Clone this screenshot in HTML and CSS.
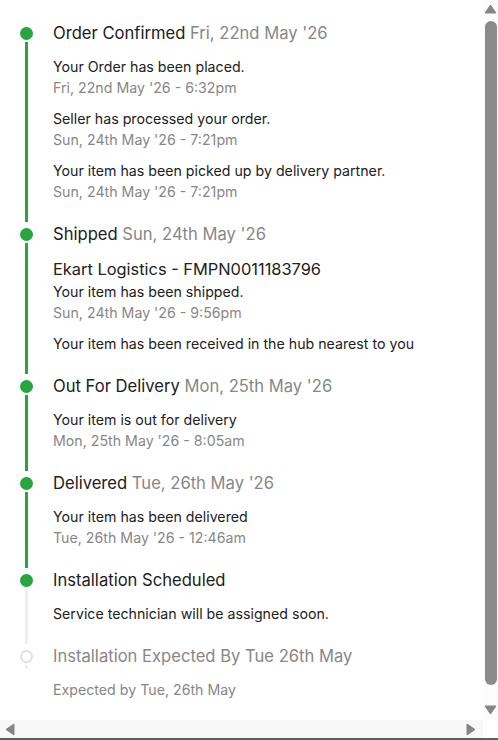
FILE: index.html
```html
<!DOCTYPE html>
<html lang="en">
<head>
    <meta charset="UTF-8">
    <meta name="viewport" content="width=device-width, initial-scale=1.0">
    <title>Order Tracking</title>
    <link rel="stylesheet" href="styles.css">
</head>
<body>
    <div class="window">
        <div class="viewport">
            <ol class="steps">
                <!-- Order confirmed -->
                <li class="step done next-done">
                    <div class="rail"><span class="dot"></span><span class="line"></span></div>
                    <div class="step-body">
                        <div class="step-title">Order Confirmed <span class="step-date">Fri, 22nd May '26</span></div>
                        <div class="events">
                            <div class="event">
                                <div class="msg">Your Order has been placed.</div>
                                <div class="time">Fri, 22nd May '26 - 6:32pm</div>
                            </div>
                            <div class="event">
                                <div class="msg">Seller has processed your order.</div>
                                <div class="time">Sun, 24th May '26 - 7:21pm</div>
                            </div>
                            <div class="event">
                                <div class="msg">Your item has been picked up by delivery partner.</div>
                                <div class="time">Sun, 24th May '26 - 7:21pm</div>
                            </div>
                        </div>
                    </div>
                </li>

                <!-- Shipped -->
                <li class="step done next-done">
                    <div class="rail"><span class="dot"></span><span class="line"></span></div>
                    <div class="step-body">
                        <div class="step-title">Shipped <span class="step-date">Sun, 24th May '26</span></div>
                        <div class="events">
                            <div class="event">
                                <div class="carrier">Ekart Logistics - FMPN0011183796</div>
                                <div class="msg">Your item has been shipped.</div>
                                <div class="time">Sun, 24th May '26 - 9:56pm</div>
                            </div>
                            <div class="event">
                                <div class="msg">Your item has been received in the hub nearest to you</div>
                            </div>
                        </div>
                    </div>
                </li>

                <!-- Out for delivery -->
                <li class="step done next-done">
                    <div class="rail"><span class="dot"></span><span class="line"></span></div>
                    <div class="step-body">
                        <div class="step-title">Out For Delivery <span class="step-date">Mon, 25th May '26</span></div>
                        <div class="events">
                            <div class="event">
                                <div class="msg">Your item is out for delivery</div>
                                <div class="time">Mon, 25th May '26 - 8:05am</div>
                            </div>
                        </div>
                    </div>
                </li>

                <!-- Delivered -->
                <li class="step done next-done">
                    <div class="rail"><span class="dot"></span><span class="line"></span></div>
                    <div class="step-body">
                        <div class="step-title">Delivered <span class="step-date">Tue, 26th May '26</span></div>
                        <div class="events">
                            <div class="event">
                                <div class="msg">Your item has been delivered</div>
                                <div class="time">Tue, 26th May '26 - 12:46am</div>
                            </div>
                        </div>
                    </div>
                </li>

                <!-- Installation scheduled -->
                <li class="step done">
                    <div class="rail"><span class="dot"></span><span class="line"></span></div>
                    <div class="step-body">
                        <div class="step-title">Installation Scheduled</div>
                        <div class="events">
                            <div class="event">
                                <div class="msg">Service technician will be assigned soon.</div>
                            </div>
                        </div>
                    </div>
                </li>

                <!-- Installation expected -->
                <li class="step pending last">
                    <div class="rail"><span class="dot"></span><span class="line"></span></div>
                    <div class="step-body">
                        <div class="step-title">Installation Expected By Tue 26th May</div>
                        <div class="events">
                            <div class="event">
                                <div class="time">Expected by Tue, 26th May</div>
                            </div>
                        </div>
                    </div>
                </li>
            </ol>
        </div>

        <!-- Vertical scrollbar -->
        <div class="vbar">
            <svg class="arrow-v" width="15" height="17" viewBox="0 0 15 17"><polygon points="2,13 7.5,5 13,13" /></svg>
            <div class="vtrack"><div class="vthumb"></div></div>
            <svg class="arrow-v" width="15" height="17" viewBox="0 0 15 17"><polygon points="2,3 13,3 7.5,11" /></svg>
        </div>

        <!-- Horizontal scrollbar -->
        <div class="hbar">
            <svg class="arrow-h" width="20" height="18" viewBox="0 0 20 18"><polygon points="6,9.5 14,4 14,15" /></svg>
            <div class="htrack"></div>
            <svg class="arrow-h" width="20" height="18" viewBox="0 0 20 18"><polygon points="4,4 12,9.5 4,15" /></svg>
        </div>
        <div class="corner"></div>
    </div>
</body>
</html>
```

FILE: styles.css
```css
html, body {
    margin: 0;
    padding: 0;
}

body {
    font-family: Inter, "Noto Sans", Arial, sans-serif;
    color: #212121;
    background-color: #fff;
}

.window {
    height: 740px;
    box-sizing: border-box;
    display: grid;
    grid-template-columns: 1fr 15px;
    grid-template-rows: 1fr 18px;
    border-bottom: 2px solid #5f5f5f;
}

.viewport {
    overflow: hidden;
}

/* scrollbars */
.vbar {
    display: flex;
    flex-direction: column;
    background-color: #fcfcfc;
}

.vtrack {
    flex: 1;
    padding: 4px 1px 0 2px;
}

.vthumb {
    height: 664px;
    border-radius: 6px;
    background-color: #8b8b8b;
}

.hbar {
    display: flex;
    background-color: #f8f8f8;
}

.htrack {
    flex: 1;
}

.corner {
    background-color: #fff;
}

.arrow-v polygon,
.arrow-h polygon {
    fill: #858585;
    stroke: #858585;
    stroke-width: 1;
    stroke-linejoin: round;
}

.arrow-v,
.arrow-h {
    display: block;
    flex-shrink: 0;
}

/* timeline */
.steps {
    list-style: none;
    margin: 0;
    padding: 21px 20px 26px 20px;
}

.step {
    display: flex;
    gap: 20px;
}

.rail {
    width: 13px;
    display: flex;
    flex-direction: column;
    align-items: center;
    flex-shrink: 0;
}

.dot {
    width: 13px;
    height: 13px;
    margin-top: 6px;
    border-radius: 50%;
    box-sizing: border-box;
    background-color: #26a541;
}

.line {
    flex: 1;
    width: 3px;
    margin-top: 2px;
    background-color: #f0f0f0;
}

.next-done .line {
    background-color: #26a541;
}

.pending .dot {
    background-color: #fff;
    border: 2px solid #e0e0e0;
}

.last .line {
    flex: none;
    height: 4px;
}

.step-body {
    flex: 1;
    padding-bottom: 20px;
}

.step-title {
    font-size: 16.6px;
    line-height: 24px;
}

.step-date {
    color: #878787;
}

.pending .step-title {
    color: #878787;
}

.events {
    margin-top: 11px;
    display: flex;
    flex-direction: column;
    gap: 10px;
}

.carrier {
    font-size: 16.4px;
    line-height: 24px;
}

.msg {
    font-size: 14.2px;
    line-height: 21px;
}

.time {
    font-size: 14.2px;
    line-height: 21px;
    color: #878787;
}
```
